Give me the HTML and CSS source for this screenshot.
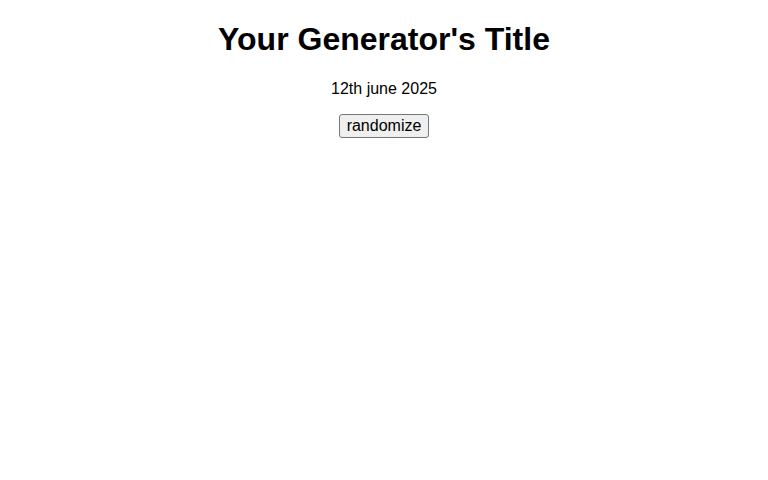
FILE: index.html
```html
<!DOCTYPE html>
<html>
<head>
<meta charset="utf-8">
<link rel="stylesheet" href="styles.css">
</head>
<body>
<div class="page">
<h1 class="title">Your Generator's Title</h1>
<p class="date">12th june 2025</p>
<button class="btn">randomize</button>
</div>
</body>
</html>
```
FILE: styles.css
```css
html, body {
  margin: 0;
  padding: 0;
}
body {
  font-family: "Liberation Sans", Arial, sans-serif;
  background: #fff;
  color: #000;
}
.page {
  text-align: center;
  padding: 0 8px;
}
.title {
  font-size: 32px;
  font-weight: bold;
  margin: 21.44px 0;
}
.date {
  font-size: 16px;
  margin: 16px 0;
}
.btn {
  font-family: "Liberation Sans", Arial, sans-serif;
  font-size: 16px;
  line-height: 18px;
  padding: 2px 7px;
  background: #efefef;
  border: 1px solid #767676;
  border-radius: 3px;
  color: #000;
}
```
